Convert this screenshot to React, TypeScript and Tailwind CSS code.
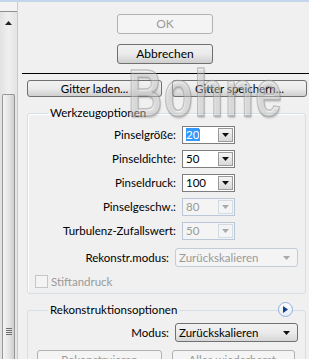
import React from "react";

const FONT = "font-['Lato','Noto_Sans',sans-serif] text-[11.5px]";

function Arrow({ disabled = false }: { disabled?: boolean }) {
  return (
    <svg width="7" height="4" viewBox="0 0 7 4">
      <path d="M0 0h7L3.5 4z" fill={disabled ? "#a9a9a9" : "#111"} />
    </svg>
  );
}

function Button({
  label,
  disabled = false,
  className = "",
}: {
  label: string;
  disabled?: boolean;
  className?: string;
}) {
  return (
    <div
      className={`flex shrink-0 items-center justify-center rounded-[3px] border leading-none ${
        disabled
          ? "border-[#adb2b5] bg-[#f4f4f4] text-[#9a9a9a]"
          : "border-[#707070] bg-gradient-to-b from-[#f2f2f2] via-[#ebebeb] to-[#cfcfcf] text-black"
      } ${className}`}
    >
      {label}
    </div>
  );
}

function NumberCombo({
  value,
  disabled = false,
  selected = false,
}: {
  value: string;
  disabled?: boolean;
  selected?: boolean;
}) {
  return (
    <div
      className={`flex h-[18px] w-[53px] items-center border p-[1px] ${
        disabled ? "border-[#b8c8d9] bg-[#f4f4f4]" : "border-[#7d7d7d] bg-white"
      }`}
    >
      <div className={`flex-1 pl-[2px] ${disabled ? "text-[#9a9a9a]" : "text-black"}`}>
        {selected ? <span className="bg-[#3399ff] text-white">{value}</span> : value}
        {selected && <span className="inline-block h-[12px] w-[1px] translate-y-[2px] bg-[#e07020]" />}
      </div>
      <div
        className={`flex h-full w-[15px] items-center justify-center border ${
          disabled
            ? "border-[#d2dbe4] bg-[#f4f4f4]"
            : "border-[#9a9a9a] bg-gradient-to-b from-[#f4f4f4] to-[#d9d9d9]"
        }`}
      >
        <Arrow disabled={disabled} />
      </div>
    </div>
  );
}

function ListCombo({ value, disabled = false }: { value: string; disabled?: boolean }) {
  return (
    <div
      className={`flex h-[19px] w-[123px] items-center justify-between rounded-[3px] border pl-[3px] pr-[7px] ${
        disabled
          ? "border-[#c3cdd8] bg-[#f4f4f4] text-[#9a9a9a]"
          : "border-[#707070] bg-gradient-to-b from-[#f2f2f2] via-[#ebebeb] to-[#d6d6d6] text-black"
      }`}
    >
      <span>{value}</span>
      <Arrow disabled={disabled} />
    </div>
  );
}

function Row({ label, children }: { label: string; children: React.ReactNode }) {
  return (
    <div className="flex items-center">
      <div className="w-[142px] pr-[1px] text-right text-black">{label}</div>
      <div className="ml-[5px]">{children}</div>
    </div>
  );
}

function Scrollbar() {
  return (
    <div className="flex w-[18px] shrink-0 flex-col border-r border-[#c9c9c9] bg-gradient-to-r from-[#e2e2e2] via-[#efefef] to-[#e4e4e4]">
      <div className="h-[10px] shrink-0 border-b border-[#8f8f8f] bg-[#f3f3f3]" />
      <div className="flex h-[20px] shrink-0 items-center justify-center pt-[2px]">
        <svg width="7" height="4" viewBox="0 0 7 4">
          <path d="M3.5 0L7 4H0z" fill="#222" />
        </svg>
      </div>
      <div className="h-[62px] shrink-0" />
      <div className="mx-[2px] flex flex-1 flex-col items-center justify-end rounded-t-[2px] border border-b-0 border-[#979797] bg-gradient-to-r from-[#f4f4f4] via-[#e6e6e6] to-[#cfcfcf] pb-[24px]">
        <div className="flex flex-col gap-[1px]">
          <div className="h-[1px] w-[6px] bg-[#6f6f6f]" />
          <div className="h-[1px] w-[6px] bg-[#6f6f6f]" />
          <div className="h-[1px] w-[6px] bg-[#6f6f6f]" />
          <div className="h-[1px] w-[6px] bg-[#6f6f6f]" />
        </div>
      </div>
    </div>
  );
}

export default function App() {
  return (
    <div
      className={`relative flex h-[359px] w-[309px] overflow-hidden border-t-2 border-[#c3d6eb] bg-[#f0f0f0] ${FONT}`}
    >
      <Scrollbar />
      <div className="flex flex-1 flex-col [&>*]:shrink-0">
        <Button label="OK" disabled className="ml-[99px] mt-[12px] h-[20px] w-[96px] text-[12px]" />
        <Button label="Abbrechen" className="ml-[99px] mt-[10px] h-[20px] w-[96px] text-[12px]" />
        <div className="ml-[4px] mt-[9px] h-[1px] bg-black" />

        <div className="ml-[9px] mt-[6px] flex gap-[10px]">
          <Button label="Gitter laden..." className="h-[17px] w-[135px]" />
          <Button label="Gitter speichern..." className="h-[17px] w-[135px]" />
        </div>

        <fieldset className="ml-[9px] mt-[8px] w-[279px] rounded-[3px] border border-[#d5dfe5] pb-[3px] pl-[7px] shadow-[inset_1px_1px_0_#fff]">
          <legend className="ml-[13px] px-[2px] leading-[16px] text-black">Werkzeugoptionen</legend>
          <div className="mt-[5px] flex flex-col gap-[6px]">
            <Row label="Pinselgröße:">
              <NumberCombo value="20" selected />
            </Row>
            <Row label="Pinseldichte:">
              <NumberCombo value="50" />
            </Row>
            <Row label="Pinseldruck:">
              <NumberCombo value="100" />
            </Row>
            <Row label="Pinselgeschw.:">
              <NumberCombo value="80" disabled />
            </Row>
            <Row label="Turbulenz-Zufallswert:">
              <NumberCombo value="50" disabled />
            </Row>
          </div>
          <div className="-ml-[7px] mt-[8px]">
            <Row label="Rekonstr.modus:">
              <ListCombo value="Zurückskalieren" disabled />
            </Row>
          </div>
          <div className="mt-[6px] flex items-center gap-[3px] text-[#9a9a9a]">
            <div className="h-[13px] w-[13px] border border-[#c6c6c6] bg-[#f4f4f4]" />
            <span>Stiftandruck</span>
          </div>
        </fieldset>

        <fieldset className="relative ml-[9px] mt-[8px] w-[279px] rounded-[3px] border border-[#d5dfe5] pl-[7px]">
          <legend className="ml-[13px] px-[2px] leading-[16px] text-black">Rekonstruktionsoptionen</legend>
          <div className="absolute -top-[16px] right-[12px] flex h-[15px] w-[15px] items-center justify-center rounded-full border border-[#8fb0db] bg-gradient-to-b from-white to-[#e4ecf6]">
            <svg width="5" height="7" viewBox="0 0 5 7">
              <path d="M0 0l5 3.5L0 7z" fill="#163c8c" />
            </svg>
          </div>
          <div className="-ml-[7px] mt-[5px]">
            <Row label="Modus:">
              <ListCombo value="Zurückskalieren" />
            </Row>
          </div>
          <div className="mt-[8px] flex gap-[10px] pl-[2px]">
            <Button label="Rekonstruieren" disabled className="h-[20px] w-[125px] items-start pt-[3px]" />
            <Button label="Alles wiederherst." disabled className="h-[20px] w-[123px] items-start pt-[3px]" />
          </div>
        </fieldset>
      </div>

      <div className="pointer-events-none absolute left-[128px] top-[58px] origin-left scale-x-[0.72] font-['Liberation_Sans',sans-serif] text-[66px] font-bold leading-none tracking-[2px] text-[rgba(255,255,255,0.35)] [-webkit-text-stroke:1.5px_rgba(150,150,150,0.55)] [text-shadow:1px_2px_2px_rgba(0,0,0,0.18)]">
        Bohne
      </div>
    </div>
  );
}
